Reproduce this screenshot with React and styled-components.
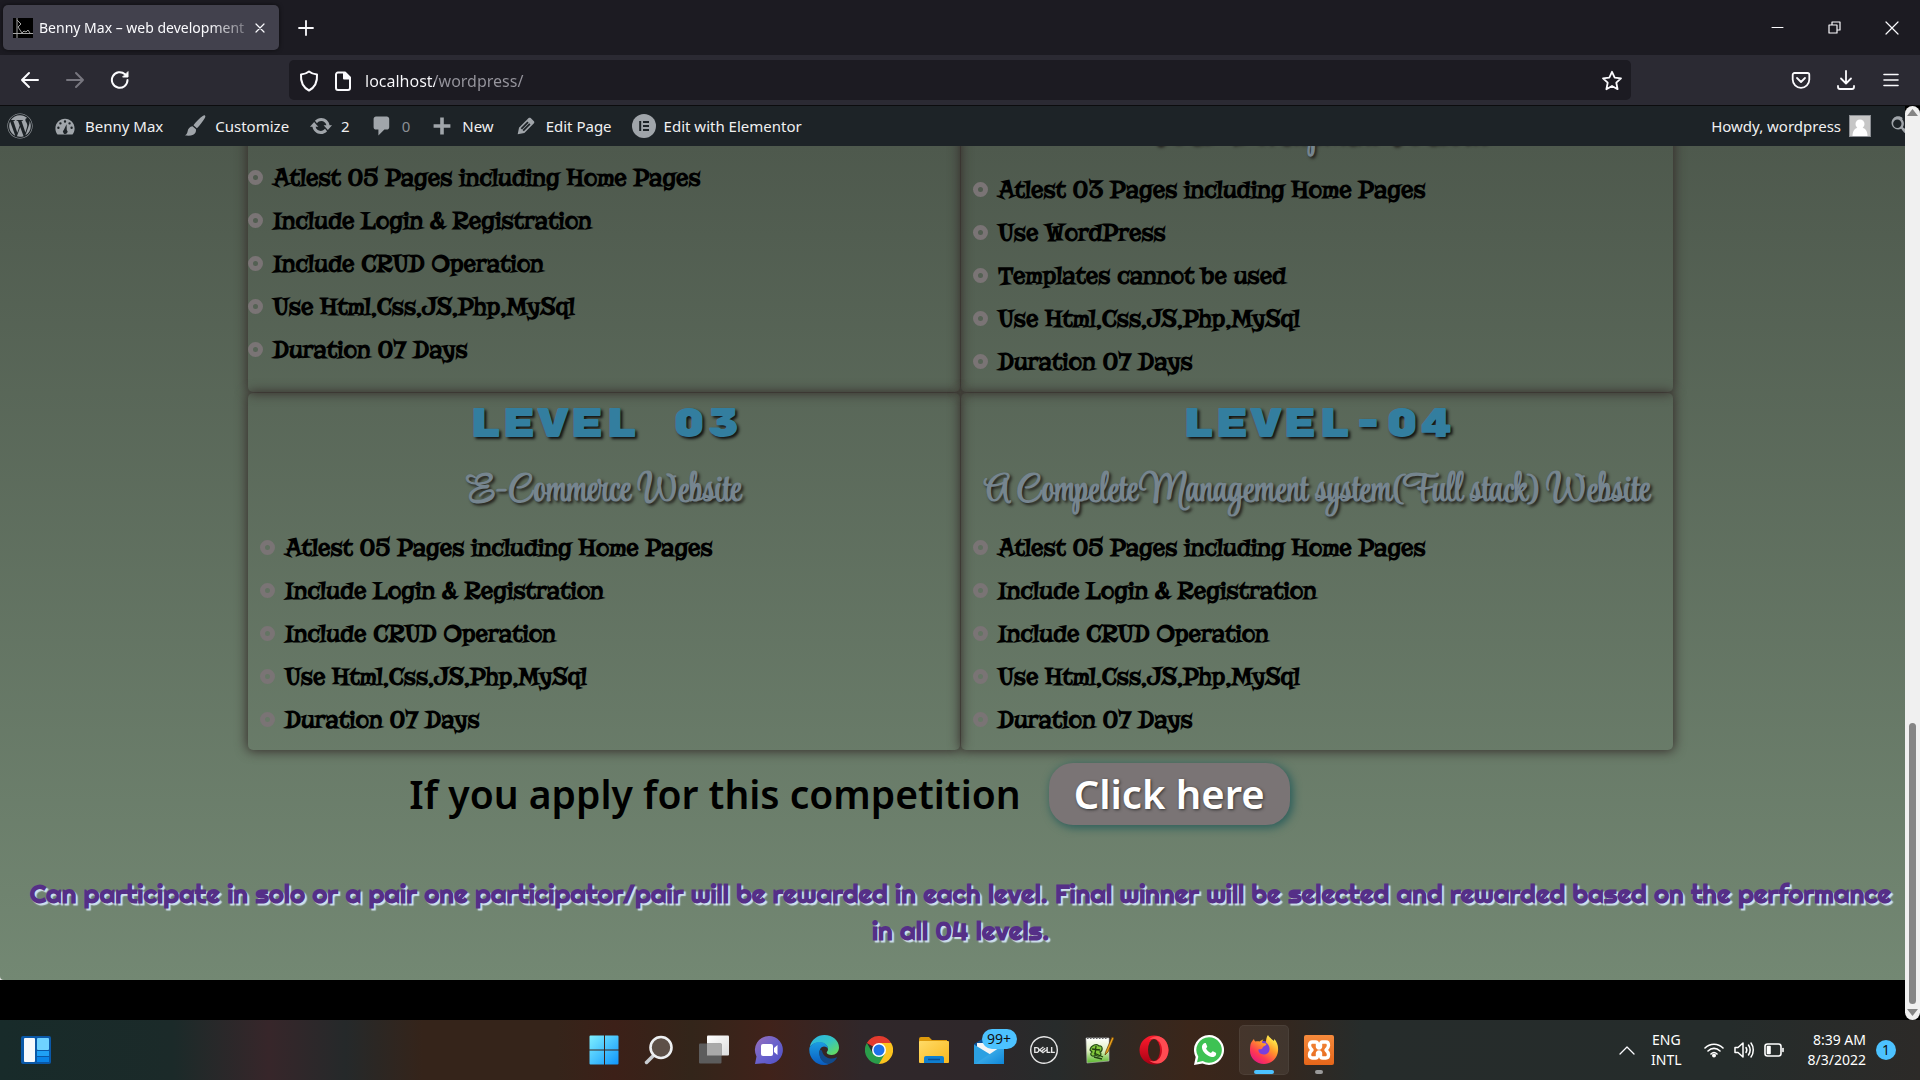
import React from 'react';
import styled, { createGlobalStyle, css } from 'styled-components';
import { FaWordpress } from 'react-icons/fa';
import { SiDell } from 'react-icons/si';

const UI = '"Segoe UI", "Noto Sans", sans-serif';

const Global = createGlobalStyle`
  *, *::before, *::after { box-sizing: border-box; }
  body { margin: 0; background: #000; overflow: hidden; font-family: ${UI}; }
  h2, h3, p, ul { margin: 0; padding: 0; }
  button { border: 0; padding: 0; background: none; color: inherit; font: inherit; cursor: pointer; }
  a { color: inherit; text-decoration: none; }
  svg { display: block; flex: none; }
`;

const Screen = styled.div`
  height: 100vh;
  display: flex;
  flex-direction: column;
`;

/* ---------- browser chrome ---------- */

const TabStrip = styled.header`
  flex: none;
  height: 55px;
  display: flex;
  align-items: center;
  padding-left: 3px;
  background: #1c1b22;
  color: #fbfbfe;
`;

const Tab = styled.div`
  width: 276px;
  height: 45px;
  display: flex;
  align-items: center;
  gap: 6px;
  padding: 0 10px;
  border-radius: 5px;
  background: #42414d;
  box-shadow: 0 0 4px rgba(0, 0, 0, 0.6);
  font-size: 14px;
`;

const TabTitle = styled.span`
  flex: 1;
  white-space: nowrap;
  mask-image: linear-gradient(to right, #000 82%, rgba(0, 0, 0, 0.3));
`;

const IconButton = styled.button`
  width: ${(p) => p.$w || 45}px;
  height: 40px;
  flex: none;
  display: flex;
  align-items: center;
  justify-content: center;
  color: #fbfbfe;
  &:disabled { color: #77767f; }
`;

const WindowControls = styled.div`
  margin-left: auto;
  display: flex;
`;

const NavBar = styled.nav`
  flex: none;
  height: 51px;
  display: flex;
  align-items: center;
  justify-content: space-between;
  padding: 0 7px;
  background: #2b2a33;
  border-bottom: 1px solid #0c0c0e;
`;

const NavGroup = styled.div`
  width: 282px;
  display: flex;
  justify-content: ${(p) => (p.$end ? 'flex-end' : 'flex-start')};
`;

const AddressBar = styled.label`
  flex: 1;
  max-width: 1342px;
  height: 40px;
  display: flex;
  align-items: center;
  gap: 11px;
  padding: 2px 8px 0;
  border-radius: 5px;
  background: #1c1b22;
  color: #fbfbfe;
`;

const AddressInput = styled.input`
  flex: 1;
  min-width: 0;
  border: 0;
  padding: 0;
  outline: 0;
  color: #fbfbfe;
  font: 16px/24px ${UI};
  background: linear-gradient(to right, #fbfbfe 70px, #96959d 70px);
  background-clip: text;
  -webkit-background-clip: text;
  -webkit-text-fill-color: transparent;
`;

/* ---------- WordPress admin bar ---------- */

const AdminBar = styled.div`
  flex: none;
  height: 40px;
  display: flex;
  align-items: center;
  gap: 20px;
  padding-left: 7px;
  overflow: hidden;
  background: #1d2327;
  color: #f0f0f1;
  font-size: 15px;
`;

const AdminLink = styled.a`
  display: flex;
  align-items: center;
  gap: 8px;
  white-space: nowrap;
  color: ${(p) => (p.$dim ? '#8b8f94' : '#f0f0f1')};
  svg { color: #a0a5aa; }
  ${(p) => p.$end && css`margin-left: auto;`}
`;

/* ---------- page ---------- */

const Viewport = styled.div`
  flex: 1;
  min-height: 0;
  display: flex;
`;

const PageColumn = styled.div`
  flex: 1;
  min-width: 0;
  display: flex;
  flex-direction: column;
`;

const PageBack = styled.div`
  flex: 1;
  min-height: 0;
  display: flex;
  background: #e4e4e4;
`;

const Page = styled.main`
  flex: 1;
  min-width: 0;
  display: flex;
  flex-direction: column;
  justify-content: flex-end;
  overflow: hidden;
  padding: 0 0 31px 16px;
  border-bottom-left-radius: 4px;
  background: linear-gradient(#4e594d, #738873);
`;

const PageFooter = styled.footer`
  flex: none;
  height: 40px;
  background: #000;
`;

const Shell = styled.div`
  width: 100%;
  max-width: 1425px;
  margin: 0 auto;
`;

const Levels = styled.section`
  display: grid;
  grid-template-columns: repeat(2, minmax(0, 1fr));
  gap: 1px;
`;

const Card = styled.article`
  display: flex;
  flex-direction: column;
  justify-content: flex-end;
  padding: ${(p) => (p.$flush ? '0 0 21px' : '0 0 9px')};
  border-radius: 5px;
  box-shadow: 0 0 12px 1px #352c2a;
`;

const LevelTitle = styled.h2`
  color: #337e9f;
  font: 400 40px/64px "Rubik Mono One", "Liberation Mono", monospace;
  text-align: center;
  white-space: nowrap;
  text-shadow: 2px 2px 3px #111;
`;

const LevelSubtitle = styled.h3`
  color: #76858f;
  font: 700 39px/69px "Style Script", "Liberation Serif", serif;
  text-align: center;
  white-space: nowrap;
  text-shadow: 2px 2px 3px #22201c;
`;

const Rules = styled.ul`
  list-style: none;
  padding-left: ${(p) => (p.$flush ? 0 : 12)}px;
`;

const Rule = styled.li`
  display: flex;
  align-items: center;
  gap: 10px;
  color: #000;
  font: 700 26px/43px "Risque", "Liberation Serif", serif;
  &::before {
    content: '';
    width: 15px;
    height: 15px;
    border: 5px solid #7a7475;
    border-radius: 50%;
  }
`;

const Apply = styled.div`
  display: flex;
  align-items: center;
  justify-content: center;
  gap: 28px;
  padding: 13px 222px 50px 0;
  color: #000;
  font: 600 39px/62px "Noto Sans", sans-serif;
  white-space: nowrap;
`;

const ApplyButton = styled.button`
  height: 62px;
  padding: 0 25px;
  border-radius: 24px;
  background: #7a7475;
  color: #fff;
  font-size: 40px;
  text-shadow: 1px 1px 3px #333;
  box-shadow: 2px 2px 8px 1px #2d5f5c;
`;

const Note = styled.p`
  color: #552f87;
  font: 700 26px/37px "Righteous", "Inter", sans-serif;
  text-align: center;
  text-shadow: 2px 2px 1px #cfe0ee;
`;

const ScrollTrack = styled.div`
  flex: none;
  width: 15px;
  display: flex;
  flex-direction: column;
  align-items: center;
  padding: 3px 0 4px;
  border-radius: 8px;
  background: #f0f0f0;
`;

const ScrollThumb = styled.div`
  flex: 0 0 31%;
  width: 7px;
  margin: auto 0 4px;
  border-radius: 4px;
  background: #858585;
`;

/* ---------- taskbar ---------- */

const Taskbar = styled.footer`
  flex: none;
  height: 60px;
  display: grid;
  grid-template-columns: 1fr auto 1fr;
  align-items: center;
  padding-left: 2px;
  color: #fff;
  background: linear-gradient(90deg, #182b2a 0, #1b2a29 9%, #37262a 14%, #25292a 18%, #35241a 22%, #35241a 29%, #3c2018 32%, #33251a 36%, #40221a 40%, #30272a 45%, #2e272a 51%, #272b2b 55%, #3b261a 62%, #33271f 67%, #262c2b 71%, #252c2b 90%, #2c2a28 100%);
`;

const Widgets = styled.button`
  margin-left: 19px;
  justify-self: start;
`;

const Apps = styled.div`
  display: flex;
  gap: 5px;
`;

const AppButton = styled.button`
  position: relative;
  width: 50px;
  height: 50px;
  display: flex;
  align-items: center;
  justify-content: center;
  border-radius: 5px;
  ${(p) => p.$active && css`
    background: rgba(255, 255, 255, 0.07);
    box-shadow: inset 0 0 0 1px rgba(255, 255, 255, 0.05);
  `}
  ${(p) => p.$bar && css`
    &::after {
      content: '';
      position: absolute;
      bottom: 1px;
      width: ${p.$bar}px;
      height: 4px;
      border-radius: 2px;
      background: ${p.$active ? '#4cc2ff' : '#9a9a9a'};
    }
  `}
`;

const Count = styled.span`
  position: absolute;
  top: 4px;
  left: 18px;
  width: 35px;
  border-radius: 10px;
  background: #4cc2ff;
  color: #111;
  font-size: 14px;
  line-height: 20px;
`;

const Tray = styled.div`
  display: flex;
  align-items: center;
  justify-content: flex-end;
  padding-right: 24px;
  font-size: 14px;
  line-height: 20px;
`;

const TrayIcons = styled.button`
  display: flex;
  gap: 10px;
  margin: 0 24px 0 22px;
`;

const TrayText = styled.button`
  text-align: ${(p) => (p.$right ? 'right' : 'center')};
  span { display: block; }
`;

const Notice = styled.button`
  width: 20px;
  height: 20px;
  margin-left: 10px;
  border-radius: 50%;
  background: #4cc2ff;
  color: #111;
`;

/* ---------- line icons ---------- */

const Line = ({ s = 20, w = 2, vb = 20, children }) => (
  <svg width={s} height={s} viewBox={`0 0 ${vb} ${vb}`} fill="none" stroke="currentColor" strokeWidth={w} strokeLinecap="round" strokeLinejoin="round">{children}</svg>
);
const Dash = ({ d }) => (
  <svg width="24" height="24" viewBox="0 0 20 20" fill="currentColor" fillRule="evenodd"><path d={d} /></svg>
);

const D = {
  comment: 'M5 2h9c1.100 0 2 .9 2 2v7c0 1.100-.9 2-2 2h-2l-5 5v-5H5c-1.100 0-2-.9-2-2V4c0-1.100.9-2 2-2z',
  plus: 'M17 8.500v3h-5.500v5.500h-3v-5.500H3v-3h5.500V3h3v5.500H17z',
  edit: 'M13.890 3.390l2.710 2.720c.46.46.42 1.240.03 1.640l-8.010 8.020-5.560 1.160 1.160-5.580s7.600-7.630 7.990-8.030c.39-.39 1.220-.39 1.680.07zm-2.730 2.790l-5.590 5.610 1.110 1.110 5.540-5.650zm-2.970 8.230l5.580-5.600-1.070-1.080-5.590 5.600z',
  update: 'M10.200 3.280c3.530 0 6.430 2.610 6.920 6h2.080l-3.500 4-3.500-4h2.320c-.45-1.970-2.210-3.450-4.320-3.450-1.450 0-2.730.71-3.540 1.780L4.950 5.660C6.230 4.200 8.110 3.280 10.200 3.280zm-.4 13.440c-3.520 0-6.430-2.610-6.920-6H.8l3.500-4c1.170 1.330 2.330 2.670 3.500 4H5.480c.45 1.970 2.210 3.450 4.320 3.450 1.450 0 2.730-.71 3.540-1.780l1.710 1.950c-1.280 1.460-3.150 2.380-5.250 2.380z',
  brush: 'M18.300 1.200c.5.400.4 1.300-.1 2.200-1.500 2.700-4.300 6.400-6.600 8.400l-2.900-2.500c1.800-2.600 5.300-6.100 7.700-7.700.8-.5 1.500-.7 1.900-.4zM7.900 10.200l2.900 2.500c.3 1.900-.5 3.600-2.300 4.500-2 1-4.700 1-7 .5 1.600-.6 2-1.700 2.300-3.200.4-2.400 1.900-4 4.100-4.300z',
  gauge: 'M3.760 17h12.480c1.100-1.370 1.760-3.110 1.760-5 0-4.420-3.580-8-8-8s-8 3.580-8 8c0 1.890.66 3.630 1.760 5zM10 5.200a1 1 0 110 2 1 1 0 010-2zM6.200 6.800a1 1 0 110 2 1 1 0 010-2zM13.800 6.800a1 1 0 110 2 1 1 0 010-2zM4.500 10.500a1 1 0 110 2 1 1 0 010-2zM15.500 10.500a1 1 0 110 2 1 1 0 010-2zM11.300 8.500l.2 4.800a1.900 1.900 0 11-2.400-.1z',
  search: 'M12.140 4.180c1.870 1.870 2.110 4.750.72 6.890 1 .8 2.400 1.600 3.270 2.620.9 1.100 1.700 2.400 1.250 2.850-.6.600-2 .2-3.660-1.420-.9-.9-1.500-2.100-2.240-2.870-2.070 1.090-4.690.76-6.440-.98-2.140-2.150-2.140-5.640 0-7.780 2.150-2.150 5.630-2.150 7.780 0zm-1.410 6.360c1.360-1.370 1.360-3.580 0-4.950-1.370-1.370-3.590-1.370-4.950 0-1.370 1.370-1.370 3.580 0 4.950 1.360 1.370 3.580 1.370 4.950 0z',
};

/* ---------- taskbar drawings ---------- */

const Pic = ({ s = 30, children }) => <svg width={s} height={s} viewBox="0 0 30 30">{children}</svg>;
const Grad = ({ id, a, b, c, v }) => (
  <linearGradient id={id} x1="0" y1="0" x2={v ? 0 : 1} y2="1">
    <stop offset="0" stopColor={a} />{c && <stop offset=".5" stopColor={c} />}<stop offset="1" stopColor={b} />
  </linearGradient>
);

const WidgetsIcon = () => (
  <Pic>
    <rect width="30" height="28" y="1" rx="2" fill="#0a58a8" />
    <rect x="3" y="3" width="11" height="24" rx="1" fill="#f6f8fb" />
    <rect x="16" y="3" width="12" height="12" rx="1" fill="#6fd2ff" />
    <rect x="16" y="16" width="12" height="5" fill="#1fa0f5" />
    <rect x="16" y="22" width="12" height="5" fill="#0a84e8" />
  </Pic>
);
const StartIcon = () => (
  <Pic>
    <defs><Grad id="win" a="#7ff0ff" b="#0f95fb" /></defs>
    <path fill="url(#win)" d="M1.500.5h13.500v14H.5v-13a1 1 0 011-1zM16 .5h12.500a1 1 0 011 1v13H16zM.5 15.500H15v14H1.500a1 1 0 01-1-1zM16 15.500h13.500v13a1 1 0 01-1 1H16z" />
  </Pic>
);
const FindIcon = () => (
  <Pic>
    <path d="M10 20l-7.500 7.500" stroke="#c9cdd1" strokeWidth="3.500" strokeLinecap="round" />
    <circle cx="17" cy="12.500" r="10.500" fill="#5d5048" stroke="#eef0f2" strokeWidth="2.600" />
  </Pic>
);
const TaskViewIcon = () => (
  <Pic>
    <defs><Grad id="tv" a="#fff" b="#dcdcdc" /></defs>
    <rect x="8" y=".5" width="22" height="20" rx="1" fill="url(#tv)" />
    <rect y="8.500" width="22.500" height="20" rx="1" fill="#5c5c5c" />
    <rect x="8" y="8.500" width="14.500" height="12" fill="#a9a9a9" />
  </Pic>
);
const ChatIcon = () => (
  <Pic>
    <defs><Grad id="chat" a="#9a6fb8" c="#6a62cc" b="#4f4fc4" /></defs>
    <path d="M15 1a14 14 0 11-4.500 27.300L1 29l1.500-7.500A14 14 0 0115 1z" fill="url(#chat)" />
    <rect x="7" y="9" width="12" height="12" rx="2" fill="#fff" />
    <path d="M20 13l3.500-3v10L20 17z" fill="#fff" />
  </Pic>
);
const EdgeIcon = () => (
  <Pic>
    <defs><Grad id="e1" a="#2bb3e8" c="#35c4c2" b="#6fe04a" /><Grad id="e2" a="#1b9de2" b="#0a5cc0" v /></defs>
    <path d="M.8 11.500C2.600 4.500 8.500 0 15.400 0 24 0 30 6 30 12.500c0 4.500-3.400 7.500-7.300 7.500-3 0-5-1.200-5-2.400 0-.8 1.300-1.300 1.300-3.600 0-3.500-3.500-6.600-8-6.600-4 0-8 1.600-10.200 4.100z" fill="url(#e1)" />
    <path d="M.5 12.500C2.500 9 6.500 7 10.800 7c5 0 8.200 3.400 8.200 7-1-2-2.500-2.600-4-2.600-3 0-5 3.500-4.500 7.600.6 5.300 5 9.500 10.500 9.500-2 1-4 1.500-6 1.500-9 0-16-8.500-14.500-17.500z" fill="url(#e2)" />
    <path d="M11.500 14.500c-2.500 3-1 14.500 9 14.300 3-.8 5.700-3 7.300-5.800.3-.6 0-.8-.6-.5-5 2.300-11.500.5-13.500-4.500-.5-1.500-.5-2.800-2.200-3.500z" fill="#114a8b" />
  </Pic>
);
const ChromeIcon = () => (
  <Pic s={28}>
    <path d="M15 15L2 7.500A15 15 0 0128 7.500z" fill="#e33b2e" />
    <path d="M15 15V7.500h13A15 15 0 0115 30z" fill="#fcc31e" />
    <path d="M2 7.500A15 15 0 0015 30l6.500-11.200L15 15 8.500 18.800z" fill="#2a9d4a" />
    <circle cx="15" cy="15" r="7.500" fill="#fff" /><circle cx="15" cy="15" r="5.900" fill="#1f72e8" />
  </Pic>
);
const FolderIcon = () => (
  <Pic>
    <defs><Grad id="fold" a="#ffdb67" b="#f9b81e" /></defs>
    <path d="M0 4a2 2 0 012-2h8l3 3h15v6H0z" fill="#dd9a0c" />
    <rect y="6" width="30" height="22" rx="1" fill="url(#fold)" />
    <path d="M5 28v-5a2 2 0 012-2h16a2 2 0 012 2v5z" fill="#0f7fd0" /><path d="M9 24.500h12" stroke="#0a4f92" strokeWidth="1.500" />
  </Pic>
);
const MailIcon = () => (
  <Pic>
    <defs><Grad id="mail" a="#5cc8f5" b="#0f86d8" /></defs>
    <path d="M0 9L15 0l15 9v10H0z" fill="#0b4f96" /><path d="M3 8h24v8l-12 6L3 14z" fill="#f5f5f5" />
    <path d="M0 9.500l18 11L30 29H0z" fill="#2ba0e2" /><path d="M30 9.500V29H1z" fill="url(#mail)" />
  </Pic>
);
const NotepadIcon = () => (
  <Pic>
    <defs><Grad id="npp" a="#fff" c="#dff0c0" b="#58b82a" v /></defs>
    <path d="M2 3h23v23L3 28z" fill="url(#npp)" stroke="#bbb" strokeWidth=".6" />
    <path d="M3 3h21" stroke="#666" strokeWidth="2" strokeDasharray="1.500 1.500" />
    <path d="M6 15c1-5 7-7 9-4 4-1 4 5 1 6 3 3-2 6-4 3-4 3-7-1-4-3z" fill="#82c83c" stroke="#254d16" strokeWidth="1.200" />
    <path d="M8 14l8 1M10 18l9 4M12 11l-1 9M18 24l-8-2" stroke="#23420f" strokeWidth="1.300" />
    <path d="M21 20l1-4 6-14 2 1-6 14z" fill="#e8a01c" stroke="#5d3b0a" strokeWidth=".7" />
  </Pic>
);
const OperaIcon = () => (
  <Pic>
    <defs><Grad id="op" a="#ff1b2d" b="#a70014" v /></defs>
    <circle cx="15" cy="15" r="14.500" fill="url(#op)" />
    <path d="M10 4.500c8-7 19-2 19.500 10.500C29 28 18 32 10 25.500c8 3 13-3 13-10.500S18 1.500 10 4.500z" fill="#ff4b52" />
    <ellipse cx="15" cy="15" rx="6" ry="11" fill="#39251b" />
  </Pic>
);
const WhatsAppIcon = () => (
  <Pic>
    <path d="M15 0a15 15 0 11-6.500 28.500L0 30l1.700-8A15 15 0 0115 0z" fill="#fff" />
    <path d="M15 2.300a12.700 12.700 0 11-6.200 23.700L3 27.300l1.300-5.600A12.700 12.700 0 0115 2.300z" fill="#3ec253" />
    <path d="M10.800 8c.7 0 1 0 1.300.8l1.100 2.700c.2.600-.9 1.700-1.200 2.100 1.200 2.300 2.700 3.500 5 4.500.5-.5 1.300-2 1.900-1.800l2.900 1.400c.6.300.4 1.600 0 2.500-.6 1.200-2.400 2-4 1.700C12.800 21 9 17.500 8 13c-.4-2 .6-4.600 2.800-5z" fill="#fff" />
  </Pic>
);
const FirefoxIcon = () => (
  <Pic>
    <defs>
      <linearGradient id="fx" x1=".85" y1=".1" x2=".2" y2="1">
        <stop offset="0" stopColor="#fff44f" /><stop offset=".35" stopColor="#ff9a2a" /><stop offset=".7" stopColor="#ff3a50" /><stop offset="1" stopColor="#e31587" />
      </linearGradient>
    </defs>
    <circle cx="14.500" cy="14.500" r="8.500" fill="#7a3fdc" />
    <path d="M2 8c1-2 2-3 3-4 .2 1 .5 2 1.500 2.500C8 6 9.500 6 10.500 6.500c1.500-1 2.500-2 4-2-1 1.200-1.500 2.200-1.500 3.300 1.500.8 3.500.4 4.500 1.200-.5 1.500-2.500 2-3.500 3-.6.600-.4 2-2 2.200-1 .2-2-.2-2.500.3-.6 2.500 1.500 5 5 5 4 0 6.500-3 6-6.500-.3-2.500-2-4.500-3.500-5.500C17 4.500 17.500 2 19 0c1 2.500 4 4 6 6l.2-2c3 3 4.300 7 3.800 12-.7 7.500-6.500 13-14 13S1 23.500 1 15.500C1 12.500 1.200 10 2 8z" fill="url(#fx)" />
  </Pic>
);
const XamppIcon = () => (
  <Pic>
    <defs><Grad id="xa" a="#f58a3c" b="#e5661a" v /></defs>
    <rect width="30" height="30" rx="2" fill="url(#xa)" />
    <path d="M8 7h3.500c1.500 0 2 1 2 2.500S13 13 15 13s1.500-2 1.500-3.500.5-2.500 2-2.500H22c2 0 2.500 1.500 2.500 3.500S23.500 13.500 22 15c1.500 1.500 2.500 2.500 2.500 4.500S24 23 22 23h-3.500c-1.500 0-2-1-2-2.500S17 17 15 17s-1.500 2-1.500 3.500-.5 2.500-2 2.500H8c-2 0-2.500-1.500-2.500-3.500S6.500 16.500 8 15c-1.500-1.500-2.500-2.500-2.500-4.500S6 7 8 7z" fill="none" stroke="#fff" strokeWidth="3.400" strokeLinejoin="round" />
  </Pic>
);

const apps = [
  ['Start', StartIcon], ['Search', FindIcon], ['Task View', TaskViewIcon], ['Chat', ChatIcon], ['Edge', EdgeIcon],
  ['Chrome', ChromeIcon], ['File Explorer', FolderIcon], ['Mail', MailIcon, { count: '99+' }],
  ['Dell', () => <SiDell size={28} color="#e6e6e6" />], ['Notepad++', NotepadIcon], ['Opera', OperaIcon], ['WhatsApp', WhatsAppIcon],
  ['Firefox', FirefoxIcon, { bar: 20, active: true }], ['XAMPP', XamppIcon, { bar: 8 }],
];

const full = ['Atlest 05 Pages including Home Pages', 'Include Login & Registration', 'Include CRUD Operation', 'Use Html,Css,JS,Php,MySql', 'Duration 07 Days'];
const levels = [
  { id: 1, flush: true, rules: full },
  { id: 2, subtitle: 'Web Development Website', rules: ['Atlest 03 Pages including Home Pages', 'Use WordPress', 'Templates cannot be used', 'Use Html,Css,JS,Php,MySql', 'Duration 07 Days'] },
  { id: 3, title: 'LEVEL 03', subtitle: 'E-Commerce Website', rules: full },
  { id: 4, title: 'LEVEL-04', subtitle: 'A Compelete Management system(Full stack) Website', rules: full },
];

const adminLinks = [
  ['Benny Max', D.gauge], ['Customize', D.brush], ['2', D.update], ['0', D.comment, true], ['New', D.plus], ['Edit Page', D.edit],
];

export default function App() {
  return (
    <Screen>
      <Global />
      <TabStrip>
        <Tab>
          <svg width="20" height="20" viewBox="0 0 20 20"><rect width="20" height="20" fill="#000" /><path d="M4 0v20M0 15.500h20M4 2l4 4-3 3 4 6 2-2 2 1 2-2 2 3" fill="none" stroke="#a5a5a5" strokeWidth="1" /></svg>
          <TabTitle>Benny Max – web development</TabTitle>
          <IconButton $w={18} aria-label="Close tab"><Line s={10} vb={10} w={1.2}><path d="M1 1l8 8M9 1l-8 8" /></Line></IconButton>
        </Tab>
        <IconButton $w={53} aria-label="New tab"><Line s={16} vb={16} w={1.8}><path d="M8 1v14M1 8h14" /></Line></IconButton>
        <WindowControls>
          <IconButton $w={57} aria-label="Minimize"><Line s={13} vb={13} w={1}><path d="M1 6.500h11" /></Line></IconButton>
          <IconButton $w={57} aria-label="Restore"><Line s={13} vb={13} w={1.2}><path d="M1 4h8v8H1zM4 4V1h8v8H9" /></Line></IconButton>
          <IconButton $w={57} aria-label="Close"><Line s={14} vb={14} w={1.2}><path d="M1 1l12 12M13 1L1 13" /></Line></IconButton>
        </WindowControls>
      </TabStrip>

      <NavBar>
        <NavGroup>
          <IconButton aria-label="Back"><Line><path d="M18 10H2M9 3l-7 7 7 7" /></Line></IconButton>
          <IconButton aria-label="Forward" disabled><Line><path d="M2 10h16M11 3l7 7-7 7" /></Line></IconButton>
          <IconButton aria-label="Reload"><Line><path d="M17.500 10a7.800 7.800 0 11-2.500-5.700l1.500 1.500" /><path d="M18 2v5h-5z" fill="currentColor" strokeWidth="1" /></Line></IconButton>
        </NavGroup>
        <AddressBar>
          <Line s={24} vb={24} w={2}><path d="M12 2.500c2.500 2 5 2.800 8 3 .5 7-1.500 12.500-8 16-6.500-3.500-8.500-9-8-16 3-.2 5.500-1 8-3z" /></Line>
          <Line s={22} vb={22} w={2}><path d="M6 2.500h7l5 5V18a2 2 0 01-2 2H6a2 2 0 01-2-2V4.500a2 2 0 012-2z" /><path d="M12 3v5.500h5.500z" fill="currentColor" /></Line>
          <AddressInput aria-label="Address" defaultValue="localhost/wordpress/" />
          <Line s={22} vb={22} w={1.8}><path d="M11 1.800l2.700 5.800 6.300.8-4.700 4.300 1.300 6.500L11 16l-5.600 3.200 1.300-6.500L2 8.400l6.300-.8z" /></Line>
        </AddressBar>
        <NavGroup $end>
          <IconButton aria-label="Pocket"><Line w={1.8}><path d="M3.500 3h13A1.800 1.800 0 0118.300 4.800V9.500a8.300 8.300 0 01-16.600 0V4.800A1.800 1.800 0 013.500 3zM6 8l4 4 4-4" /></Line></IconButton>
          <IconButton aria-label="Downloads"><Line w={1.8}><path d="M10 1v12M5 8.500l5 5 5-5M2 16v1a2 2 0 002 2h12a2 2 0 002-2v-1" /></Line></IconButton>
          <IconButton aria-label="Menu"><Line s={18} vb={18} w={1.6}><path d="M2 3.500h14M2 9h14M2 14.500h14" /></Line></IconButton>
        </NavGroup>
      </NavBar>

      <Viewport>
        <PageColumn>
          <AdminBar>
            <AdminLink href="#" aria-label="About WordPress"><FaWordpress size={26} /></AdminLink>
            {adminLinks.map(([text, d, dim]) => (
              <AdminLink href="#" key={text} $dim={dim}><Dash d={d} />{text}</AdminLink>
            ))}
            <AdminLink href="#">
              <svg width="24" height="24" viewBox="0 0 24 24"><circle cx="12" cy="12" r="12" fill="#a0a5aa" /><path d="M7.200 7h2v10h-2zM11 7h6v2h-6zM11 11h6v2h-6zM11 15h6v2h-6z" fill="#1d2327" /></svg>
              Edit with Elementor
            </AdminLink>
            <AdminLink href="#" $end>
              Howdy, wordpress
              <svg width="22" height="22" viewBox="0 0 22 22"><rect width="22" height="22" fill="#8c8f94" /><rect x="1" y="1" width="20" height="20" fill="#c6c6c6" /><circle cx="11" cy="9" r="4.500" fill="#fff" /><path d="M3.500 21c0-6 3-8.500 7.500-8.500s7.500 2.500 7.500 8.500z" fill="#fff" /></svg>
            </AdminLink>
            <AdminLink href="#" aria-label="Search"><svg width="14" height="24" viewBox="3 0 12 20" fill="currentColor" fillRule="evenodd" preserveAspectRatio="xMinYMid slice"><path d={D.search} /></svg></AdminLink>
          </AdminBar>
          <PageBack>
            <Page>
              <Shell>
                <Levels>
                  {levels.map((l) => (
                    <Card key={l.id} $flush={l.flush}>
                      {l.title && <LevelTitle>{l.title}</LevelTitle>}
                      {l.subtitle && <LevelSubtitle>{l.subtitle}</LevelSubtitle>}
                      <Rules $flush={l.flush}>{l.rules.map((r) => <Rule key={r}>{r}</Rule>)}</Rules>
                    </Card>
                  ))}
                </Levels>
                <Apply>
                  <span>If you apply for this competition</span>
                  <ApplyButton>Click here</ApplyButton>
                </Apply>
              </Shell>
              <Note>
                Can participate in solo or a pair one participator/pair will be rewarded in each level. Final winner will be selected and rewarded based on the performance in all 04 levels.
              </Note>
            </Page>
          </PageBack>
          <PageFooter />
        </PageColumn>
        <ScrollTrack>
          <svg width="11" height="8" viewBox="0 0 11 8"><path d="M5.500 0L11 7H0z" fill="#858585" /></svg>
          <ScrollThumb />
          <svg width="11" height="8" viewBox="0 0 11 8"><path d="M5.500 8L11 1H0z" fill="#858585" /></svg>
        </ScrollTrack>
      </Viewport>

      <Taskbar>
        <Widgets aria-label="Widgets"><WidgetsIcon /></Widgets>
        <Apps>
          {apps.map(([name, Icon, o = {}]) => (
            <AppButton key={name} aria-label={name} $bar={o.bar} $active={o.active}>
              <Icon />
              {o.count && <Count>{o.count}</Count>}
            </AppButton>
          ))}
        </Apps>
        <Tray>
          <IconButton $w={48} aria-label="Hidden icons"><Line s={16} vb={16} w={1.3}><path d="M1 12l7-7 7 7" /></Line></IconButton>
          <TrayText><span>ENG</span><span>INTL</span></TrayText>
          <TrayIcons aria-label="Network, volume, battery">
            <Line w={1.6}><path d="M1 8c5-5 13-5 18 0M4 11c3.500-3.500 8.500-3.500 12 0M7 14c2-2 4-2 6 0" /><circle cx="10" cy="15.500" r="1.200" fill="currentColor" /></Line>
            <Line w={1.5}><path d="M1 7.500h3L9 3v14l-5-4.500H1zM12 7.500c1 1.500 1 3.500 0 5M14.500 5c2 3 2 7 0 10M17 3c3 4 3 10 0 14" /></Line>
            <Line w={1.6}><rect x="1" y="4" width="16" height="12" rx="2.500" /><rect x="3.500" y="6.500" width="2.500" height="7" fill="currentColor" /><path d="M19 8.500v3" /></Line>
          </TrayIcons>
          <TrayText $right><span>8:39 AM</span><span>8/3/2022</span></TrayText>
          <Notice aria-label="1 notification">1</Notice>
        </Tray>
      </Taskbar>
    </Screen>
  );
}
